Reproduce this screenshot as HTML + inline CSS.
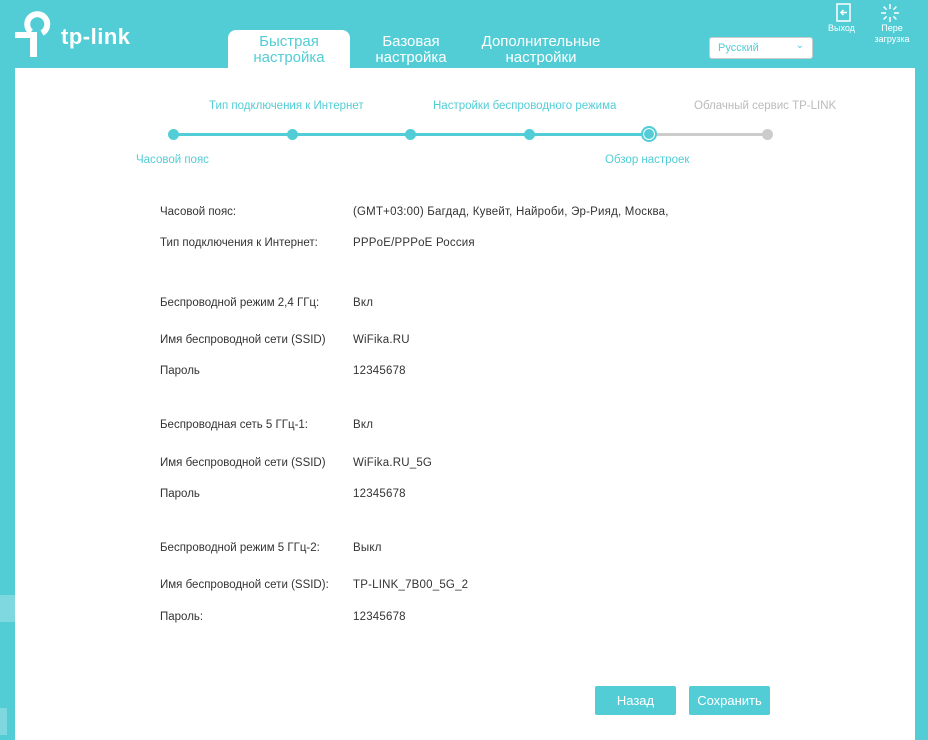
<!DOCTYPE html>
<html><head><meta charset="utf-8"><style>
*{margin:0;padding:0;box-sizing:border-box}
body{width:928px;height:740px;background:#52cdd6;font-family:"Liberation Sans",sans-serif;position:relative;overflow:hidden}
.abs{position:absolute}
.main{left:15px;top:68px;width:900px;height:672px;background:#fff}
.tab{text-align:center;font-size:15px;line-height:16px;color:#fff}
.tabA{left:228px;top:30px;width:122px;height:38px;background:#fff;border-radius:8px 8px 0 0;color:#52cdd6;padding-top:4px}
.st{font-size:11.5px;color:#52cdd6;white-space:nowrap}
.dot{width:11px;height:11px;border-radius:50%;background:#52cdd6;top:129px}
.lbl{font-size:11.5px;color:#333;left:160px;white-space:nowrap}
.val{font-size:11.5px;color:#333;left:353px;white-space:nowrap;letter-spacing:0.2px}
.btn{background:#52cdd6;color:#fff;font-size:13px;text-align:center;line-height:29px;border-radius:2px;top:686px;height:29px}
</style></head><body>
<div class="abs" style="left:0;top:595px;width:15px;height:27px;background:#7fd8df"></div>
<div class="abs" style="left:0;top:708px;width:7px;height:27px;background:#7fd8df"></div>
<svg class="abs" style="left:0;top:0" width="140" height="62" viewBox="0 0 140 62">
<rect x="15" y="32" width="22" height="6" fill="#fff"/>
<rect x="30" y="32" width="7" height="25" fill="#fff"/>
<path d="M31 32 A10 10 0 1 1 42 33" stroke="#fff" stroke-width="6" fill="none"/>
<text x="61" y="44" fill="#fff" font-size="22" font-weight="bold" font-family="Liberation Sans" letter-spacing="0.5">tp-link</text></svg>
<div class="abs main"></div>
<div class="abs tab tabA">Быстрая<br>настройка</div>
<div class="abs tab" style="left:365px;top:34px;width:92px">Базовая<br>настройка</div>
<div class="abs tab" style="left:470px;top:34px;width:142px">Дополнительные<br>настройки</div>
<div class="abs" style="left:709px;top:37px;width:104px;height:22px;background:#fff;border:1px solid #ccc;border-radius:3px;font-size:11px;color:#52cdd6;padding:4px 8px">Русский<span style="position:absolute;right:8px;top:2px;font-size:10px">⌄</span></div>
<svg class="abs" style="left:836px;top:3px" width="16" height="20" viewBox="0 0 16 20"><rect x="1" y="1" width="13" height="17" fill="none" stroke="#fff" stroke-width="1.5"/><path d="M11 9.5H5M7.5 7L5 9.5 7.5 12" stroke="#fff" stroke-width="1.5" fill="none"/></svg>
<div class="abs" style="left:828px;top:23px;font-size:9px;color:#fff">Выход</div>
<svg class="abs" style="left:880px;top:3px" width="20" height="20" viewBox="0 0 20 20" stroke="#fff" stroke-width="1.5"><path d="M10 1v5M10 14v5M1 10h5M14 10h5M3.6 3.6l3 3M13.4 13.4l3 3M3.6 16.4l3-3M13.4 6.6l3-3"/></svg>
<div class="abs" style="left:870px;top:23px;width:44px;text-align:center;font-size:9px;color:#fff;line-height:11px">Пере<br>загрузка</div>
<div class="abs st" style="left:209px;top:100px">Тип подключения к Интернет</div>
<div class="abs st" style="left:433px;top:100px">Настройки беспроводного режима</div>
<div class="abs st" style="left:694px;top:100px;color:#bbb">Облачный сервис TP-LINK</div>
<div class="abs" style="left:173px;top:133px;width:476px;height:3px;background:#52cdd6"></div>
<div class="abs" style="left:649px;top:133px;width:118px;height:3px;background:#ccc"></div>
<div class="abs dot" style="left:168px"></div>
<div class="abs dot" style="left:287px"></div>
<div class="abs dot" style="left:405px"></div>
<div class="abs dot" style="left:524px"></div>
<div class="abs dot" style="left:641px;top:126px;width:16px;height:16px;border:2px dotted #52cdd6;background:#52cdd6;box-shadow:0 0 0 1px #fff inset"></div>
<div class="abs dot" style="left:762px;background:#ccc"></div>
<div class="abs st" style="left:136px;top:154px">Часовой пояс</div>
<div class="abs st" style="left:605px;top:154px">Обзор настроек</div>
<div class="abs lbl" style="top:206px">Часовой пояс:</div><div class="abs val" style="top:206px">(GMT+03:00) Багдад, Кувейт, Найроби, Эр-Рияд, Москва,</div>
<div class="abs lbl" style="top:237px">Тип подключения к Интернет:</div><div class="abs val" style="top:237px">PPPoE/PPPoE Россия</div>
<div class="abs lbl" style="top:297px">Беспроводной режим 2,4 ГГц:</div><div class="abs val" style="top:297px">Вкл</div>
<div class="abs lbl" style="top:334px">Имя беспроводной сети (SSID)</div><div class="abs val" style="top:334px">WiFika.RU</div>
<div class="abs lbl" style="top:365px">Пароль</div><div class="abs val" style="top:365px">12345678</div>
<div class="abs lbl" style="top:419px">Беспроводная сеть 5 ГГц-1:</div><div class="abs val" style="top:419px">Вкл</div>
<div class="abs lbl" style="top:457px">Имя беспроводной сети (SSID)</div><div class="abs val" style="top:457px">WiFika.RU_5G</div>
<div class="abs lbl" style="top:488px">Пароль</div><div class="abs val" style="top:488px">12345678</div>
<div class="abs lbl" style="top:542px">Беспроводной режим 5 ГГц-2:</div><div class="abs val" style="top:542px">Выкл</div>
<div class="abs lbl" style="top:579px">Имя беспроводной сети (SSID):</div><div class="abs val" style="top:579px">TP-LINK_7B00_5G_2</div>
<div class="abs lbl" style="top:611px">Пароль:</div><div class="abs val" style="top:611px">12345678</div>
<div class="abs btn" style="left:595px;width:81px">Назад</div>
<div class="abs btn" style="left:689px;width:81px">Сохранить</div>
</body></html>
